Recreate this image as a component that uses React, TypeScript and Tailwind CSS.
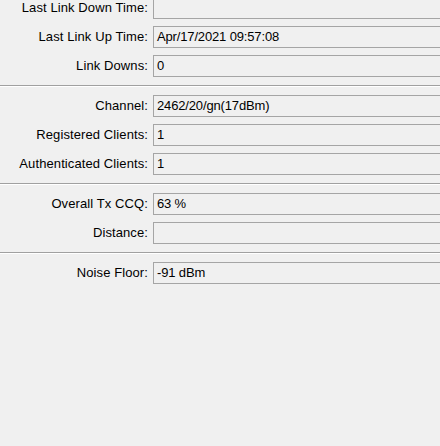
import React from "react";

interface Field {
  label: string;
  value: string;
}

const sections: Field[][] = [
  [
    { label: "Last Link Down Time:", value: "" },
    { label: "Last Link Up Time:", value: "Apr/17/2021 09:57:08" },
    { label: "Link Downs:", value: "0" },
  ],
  [
    { label: "Channel:", value: "2462/20/gn(17dBm)" },
    { label: "Registered Clients:", value: "1" },
    { label: "Authenticated Clients:", value: "1" },
  ],
  [
    { label: "Overall Tx CCQ:", value: "63 %" },
    { label: "Distance:", value: "" },
  ],
  [{ label: "Noise Floor:", value: "-91 dBm" }],
];

const Row = ({ field }: { field: Field }) => (
  <div className="flex items-center h-[22px]">
    <div className="w-[149px] shrink-0 text-right pr-[1px] text-black tracking-[0.1px]">
      {field.label}
    </div>
    <div className="ml-[4px] flex-1 h-[22px] border border-r-0 border-[#a5a5a5] bg-[#f0f0f0] flex items-center pl-[3px] text-black tracking-[-0.15px]">
      {field.value}
    </div>
  </div>
);

export default function App() {
  return (
    <div
      className="w-[440px] h-[446px] bg-[#f0f0f0] overflow-hidden text-[13px]"
      style={{ fontFamily: '"Liberation Sans", Arial, sans-serif' }}
    >
      <div className="-mt-[3px]">
        {sections.map((sec, i) => (
          <div key={i}>
            {i > 0 && (
              <div className="my-[8px] border-t border-[#a0a0a0] border-b border-b-white" />
            )}
            <div className="flex flex-col gap-[7px]">
              {sec.map((f) => (
                <Row key={f.label} field={f} />
              ))}
            </div>
          </div>
        ))}
      </div>
    </div>
  );
}
